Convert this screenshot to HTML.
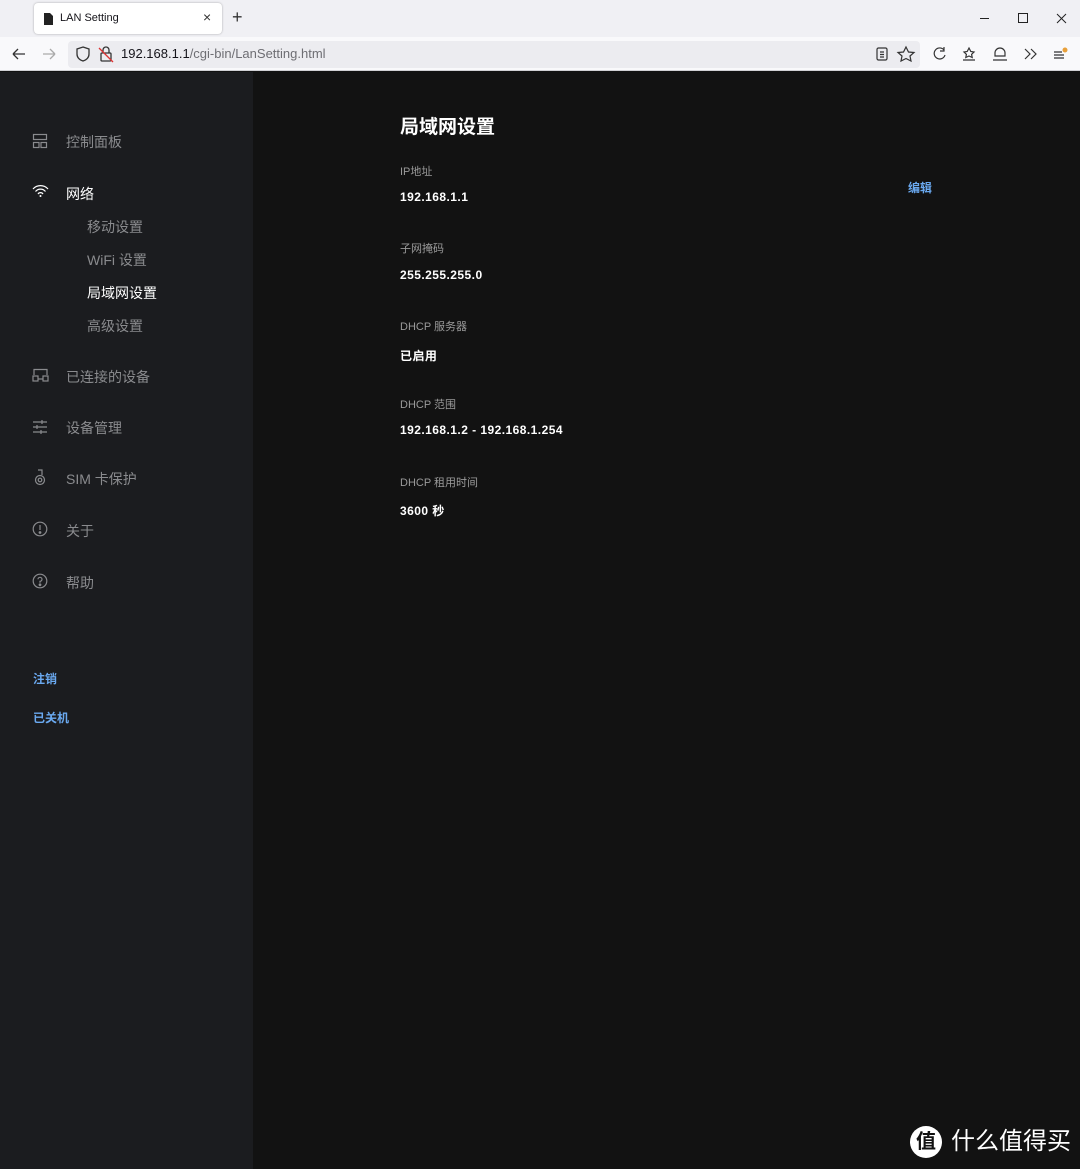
<!DOCTYPE html>
<html><head><meta charset="utf-8">
<style>
*{margin:0;padding:0;box-sizing:border-box}
body{width:1080px;height:1169px;overflow:hidden;background:#121212;font-family:"Liberation Sans","Noto Sans CJK SC",sans-serif;position:relative}
.abs{position:absolute}
#tabbar{left:0;top:0;width:1080px;height:37px;background:#f0f0f4}
#tab{left:34px;top:3px;width:188px;height:31px;background:#fff;border-radius:4px;box-shadow:0 0 2px rgba(0,0,0,.3)}
#toolbar{left:0;top:37px;width:1080px;height:34px;background:#f9f9fb;border-bottom:1px solid #d0d0d4}
#url{left:68px;top:41px;width:852px;height:27px;background:#ececf0;border-radius:4px}
#side{left:0;top:72px;width:253px;height:1097px;background:#1b1c1f}
.nav{position:absolute;left:66px;font-size:14px;color:#8a8b8e}
.sub{position:absolute;left:87px;font-size:14px;color:#8a8b8e}
.ico{position:absolute;left:32px}
.lbl{position:absolute;left:400px;font-size:11px;color:#9a9a9a}
.val{position:absolute;left:400px;font-size:12px;color:#fff;font-weight:bold;letter-spacing:.45px}
</style></head><body>
<div id="tabbar" class="abs"></div>
<div id="tab" class="abs"></div>
<svg class="abs" style="left:44px;top:13px" width="9" height="12"><path d="M0 0H6L9 3V12H0Z" fill="#222"/></svg>
<div class="abs" style="left:60px;top:12px;font-size:11px;color:#15141a">LAN Setting</div>
<div class="abs" style="left:203px;top:9px;font-size:14px;color:#333">×</div>
<div class="abs" style="left:232px;top:7px;font-size:18px;color:#333">+</div>
<svg class="abs" style="left:975px;top:10px" width="100" height="16" fill="none" stroke="#222" stroke-width="1"><path d="M5 8.5H14"/><rect x="43.5" y="3.5" width="9" height="9"/><path d="M82 4L91 13M91 4L82 13"/></svg>
<div id="toolbar" class="abs"></div>
<div id="url" class="abs"></div>
<svg class="abs" style="left:10px;top:45px" width="60" height="18" fill="none" stroke="#333" stroke-width="1.3"><path d="M3 9H15M3 9L8 4M3 9L8 14"/><path d="M33 9H45M45 9L40 4M45 9L40 14" stroke="#aaa"/></svg>
<svg class="abs" style="left:75px;top:45px" width="40" height="18" fill="none" stroke-width="1.3"><path d="M8 2L14 4V9C14 13 11 15 8 16C5 15 2 13 2 9V4Z" stroke="#333"/><rect x="26" y="8" width="10" height="8" rx="1" stroke="#333"/><path d="M28 8V5A3 3 0 0 1 34 5V8" stroke="#333"/><path d="M24 3L38 17" stroke="#d33"/></svg>
<div class="abs" style="left:121px;top:46px;font-size:13px;color:#15141a">192.168.1.1<span style="color:#6e6e73">/cgi-bin/LanSetting.html</span></div>
<svg class="abs" style="left:874px;top:45px" width="200" height="18" fill="none" stroke="#333" stroke-width="1.2"><rect x="3" y="3" width="10" height="12" rx="1.5"/><path d="M6 7H10M6 9.5H10M6 12H10"/><path d="M32 2L34.5 7L40 7.5L36 11L37 16L32 13.5L27 16L28 11L24 7.5L29.5 7Z"/><path d="M70 5A5.5 5.5 0 1 0 71 10M70 2V6H66"/><path d="M95 3L96.8 6.5L100 7L97.6 9.3L98.2 12.5L95 11L91.8 12.5L92.4 9.3L90 7L93.2 6.5Z M89 15H101"/><path d="M121 8A5 5 0 1 1 131 8V11H121ZM119 15H133"/><path d="M151 4L156 9L151 14M157 4L162 9L157 14"/><path d="M180 7H188M180 10H190M180 13H190"/><circle cx="191" cy="5" r="2.5" fill="#e8a03a" stroke="none"/></svg>
<div id="side" class="abs"></div>
<svg class="ico" style="top:133px" width="16" height="16" fill="none" stroke="#8a8b8e" stroke-width="1.2"><rect x="1.5" y="1.5" width="13" height="5"/><rect x="1.5" y="9.5" width="5.5" height="5"/><rect x="9" y="9.5" width="5.5" height="5"/></svg>
<div class="nav" style="top:132px">控制面板</div>
<svg class="ico" style="top:184px" width="17" height="14" fill="none" stroke="#fff" stroke-width="1.2"><path d="M1 5A10 10 0 0 1 16 5M3.5 7.5A6.5 6.5 0 0 1 13.5 7.5M6 10A3 3 0 0 1 11 10"/><circle cx="8.5" cy="12" r="1" fill="#fff" stroke="none"/></svg>
<div class="nav" style="top:184px;color:#fff">网络</div>
<div class="sub" style="top:217px">移动设置</div>
<div class="sub" style="top:250px">WiFi 设置</div>
<div class="sub" style="top:283px;color:#fff">局域网设置</div>
<div class="sub" style="top:316px">高级设置</div>
<svg class="ico" style="top:368px" width="17" height="14" fill="none" stroke="#8a8b8e" stroke-width="1.2"><path d="M2 7V1.5H15V7"/><rect x="1" y="8" width="5" height="5"/><rect x="11" y="8" width="5" height="5"/><path d="M6 11H11"/></svg>
<div class="nav" style="top:367px">已连接的设备</div>
<svg class="ico" style="top:420px" width="16" height="14" fill="none" stroke="#8a8b8e" stroke-width="1.2"><path d="M1 2H15M1 7H15M1 12H15"/><path d="M10 0V4M5 5V9M9 10V14"/></svg>
<div class="nav" style="top:418px">设备管理</div>
<svg class="ico" style="top:469px;left:34px" width="12" height="17" fill="none" stroke="#8a8b8e" stroke-width="1.2"><path d="M4 1H8V6"/><circle cx="6" cy="11" r="4.5"/><circle cx="6" cy="11" r="1.8"/></svg>
<div class="nav" style="top:469px">SIM 卡保护</div>
<svg class="ico" style="top:521px" width="16" height="16" fill="none" stroke="#8a8b8e" stroke-width="1.2"><circle cx="8" cy="8" r="6.8"/><path d="M8 4V9"/><circle cx="8" cy="11.5" r=".8" fill="#8a8b8e"/></svg>
<div class="nav" style="top:521px">关于</div>
<svg class="ico" style="top:573px" width="16" height="16" fill="none" stroke="#8a8b8e" stroke-width="1.2"><circle cx="8" cy="8" r="6.8"/><path d="M6 6.3A2 2 0 1 1 8 8.3V9.8"/><circle cx="8" cy="11.8" r=".8" fill="#8a8b8e"/></svg>
<div class="nav" style="top:573px">帮助</div>
<div class="abs" style="left:33px;top:670px;font-size:12px;font-weight:bold;color:#6aa9f0">注销</div>
<div class="abs" style="left:33px;top:709px;font-size:12px;font-weight:bold;color:#6aa9f0">已关机</div>
<div class="abs" style="left:400px;top:112px;font-size:19px;font-weight:bold;color:#fff">局域网设置</div>
<div class="lbl" style="top:163px">IP地址</div>
<div class="val" style="top:190px">192.168.1.1</div>
<div class="abs" style="left:908px;top:179px;font-size:12px;font-weight:bold;color:#6aa9f0">编辑</div>
<div class="lbl" style="top:240px">子网掩码</div>
<div class="val" style="top:268px">255.255.255.0</div>
<div class="lbl" style="top:318px">DHCP 服务器</div>
<div class="val" style="top:347px">已启用</div>
<div class="lbl" style="top:396px">DHCP 范围</div>
<div class="val" style="top:423px">192.168.1.2 - 192.168.1.254</div>
<div class="lbl" style="top:474px">DHCP 租用时间</div>
<div class="val" style="top:502px">3600 秒</div>
<div class="abs" style="left:910px;top:1126px;width:32px;height:32px;border-radius:50%;background:#fff;color:#111;font-size:20px;font-weight:bold;text-align:center;line-height:32px">值</div>
<div class="abs" style="left:951px;top:1126px;font-size:24px;color:#fff;line-height:32px">什么值得买</div>
</body></html>
